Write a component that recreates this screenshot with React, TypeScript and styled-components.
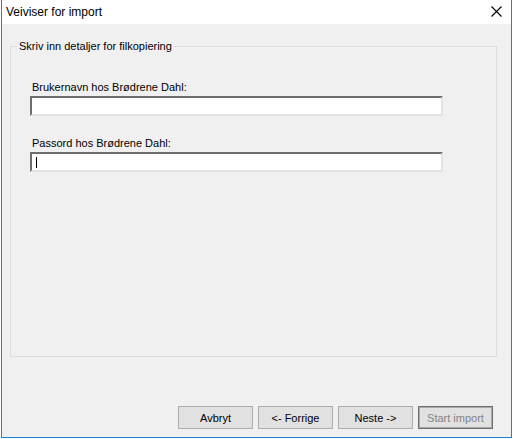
import { createGlobalStyle } from "styled-components";
import styled from "styled-components";

const GlobalStyle = createGlobalStyle`
    html, body {
        margin: 0;
        padding: 0;
        background: #ffffff;
    }
    body {
        font-family: "Liberation Sans", Arial, sans-serif;
        font-size: 11px;
        color: #000000;
    }
`;

function CloseIcon() {
    return (
        <svg width="11" height="11" viewBox="0 0 11 11">
            <path d="M0.5 0.5 L10.5 10.5 M10.5 0.5 L0.5 10.5" stroke="#000" strokeWidth="1.1" fill="none" />
        </svg>
    );
}

function App() {
    return (
        <>
            <GlobalStyle />
            <Window>
                <TitleBar>
                    <Title>Veiviser for import</Title>
                    <CloseButton>
                        <CloseIcon />
                    </CloseButton>
                </TitleBar>
                <Body>
                    <GroupBox>
                        <Legend>Skriv inn detaljer for filkopiering</Legend>
                        <Field>
                            <FieldLabel>Brukernavn hos Brødrene Dahl:</FieldLabel>
                            <TextBox />
                        </Field>
                        <Field>
                            <FieldLabel>Passord hos Brødrene Dahl:</FieldLabel>
                            <TextBox>
                                <Caret />
                            </TextBox>
                        </Field>
                    </GroupBox>
                    <ButtonRow>
                        <Button>Avbryt</Button>
                        <Button>&lt;- Forrige</Button>
                        <Button>Neste -&gt;</Button>
                        <Button $disabled>Start import</Button>
                    </ButtonRow>
                </Body>
            </Window>
        </>
    );
}

const Window = styled.div`
    margin-left: 1px;
    width: 511px;
    height: 438px;
    box-sizing: border-box;
    border: 1px solid #1883d7;
    border-top: none;
    display: flex;
    flex-direction: column;
    background: #f0f0f0;
`;

const TitleBar = styled.div`
    height: 24px;
    background: #ffffff;
    display: flex;
    align-items: center;
    justify-content: space-between;
    padding: 0 9px 0 4px;
`;

const Title = styled.span`
    font-size: 12px;
    color: #000000;
    margin-top: -1px;
`;

const CloseButton = styled.div`
    display: flex;
    align-items: center;
    margin-top: -1px;
`;

const Body = styled.div`
    flex: 1;
    display: flex;
    flex-direction: column;
    padding: 22px 14px 0 8px;
`;

const GroupBox = styled.div`
    position: relative;
    height: 311px;
    box-sizing: border-box;
    border: 1px solid #dcdcdc;
    padding: 34px 0 0 19px;
    display: flex;
    flex-direction: column;
    gap: 21px;
`;

const Legend = styled.span`
    position: absolute;
    top: -7px;
    left: 6px;
    padding: 0 2px;
    background: #f0f0f0;
    line-height: 13px;
`;

const Field = styled.div`
    display: flex;
    flex-direction: column;
    gap: 2px;
`;

const FieldLabel = styled.span`
    line-height: 13px;
    padding-left: 2px;
`;

const TextBox = styled.div`
    width: 413px;
    height: 20px;
    box-sizing: border-box;
    background: #ffffff;
    border-top: 2px solid #6d6d6d;
    border-left: 2px solid #6d6d6d;
    border-right: 2px solid #e3e3e3;
    border-bottom: 2px solid #e3e3e3;
    display: flex;
    align-items: center;
    padding-left: 4px;
`;

const Caret = styled.span`
    width: 1px;
    height: 11px;
    background: #000000;
`;

const ButtonRow = styled.div`
    margin-top: auto;
    margin-bottom: 8px;
    display: flex;
    justify-content: flex-end;
    gap: 5px;
    padding-right: 4px;
`;

const Button = styled.div<{ $disabled?: boolean }>`
    width: 75px;
    height: 23px;
    box-sizing: border-box;
    background: #e1e1e1;
    border: 1px solid ${props => props.$disabled ? "#707070" : "#adadad"};
    box-shadow: ${props => props.$disabled ? "inset 0 0 0 1px #a8a8a8" : "none"};
    color: ${props => props.$disabled ? "#838383" : "#000000"};
    display: flex;
    align-items: center;
    justify-content: center;
    font-size: 11px;
`;

export default App;
